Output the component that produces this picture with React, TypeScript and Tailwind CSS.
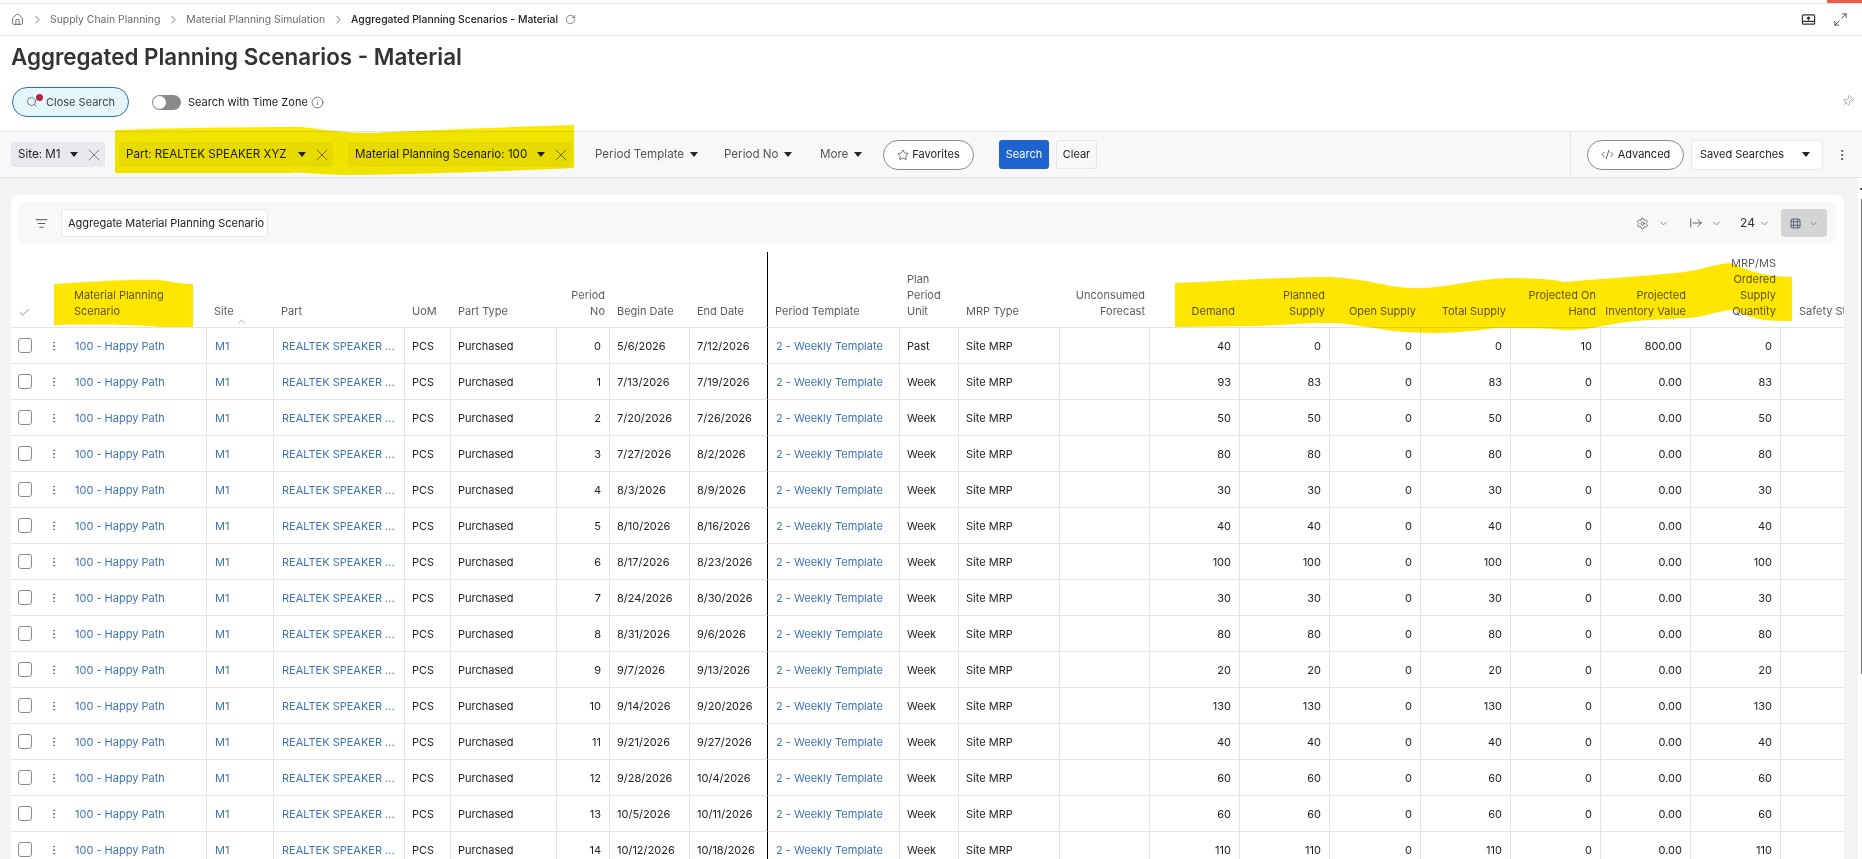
import {
  ArrowRightFromLine,
  Check,
  ChevronDown,
  ChevronRight,
  ChevronUp,
  CodeXml,
  EllipsisVertical,
  Home,
  Info,
  ListFilter,
  Maximize2,
  Pin,
  RotateCw,
  Search,
  Settings,
  Star,
  X,
} from "lucide-react";

type Row = { begin: string; end: string; unit: string; demand: number; planned: number; onHand: number; inv: string };

const rowData: [string, string, number, number][] = [
  ["5/6/2026", "7/12/2026", 40, 0],
  ["7/13/2026", "7/19/2026", 93, 83],
  ["7/20/2026", "7/26/2026", 50, 50],
  ["7/27/2026", "8/2/2026", 80, 80],
  ["8/3/2026", "8/9/2026", 30, 30],
  ["8/10/2026", "8/16/2026", 40, 40],
  ["8/17/2026", "8/23/2026", 100, 100],
  ["8/24/2026", "8/30/2026", 30, 30],
  ["8/31/2026", "9/6/2026", 80, 80],
  ["9/7/2026", "9/13/2026", 20, 20],
  ["9/14/2026", "9/20/2026", 130, 130],
  ["9/21/2026", "9/27/2026", 40, 40],
  ["9/28/2026", "10/4/2026", 60, 60],
  ["10/5/2026", "10/11/2026", 60, 60],
  ["10/12/2026", "10/18/2026", 110, 110],
];

const rows: Row[] = rowData.map(([begin, end, demand, planned], i) => ({
  begin,
  end,
  demand,
  planned,
  unit: i === 0 ? "Past" : "Week",
  onHand: i === 0 ? 10 : 0,
  inv: i === 0 ? "800.00" : "0.00",
}));

const colWidths = [
  "w-[35px]", "w-[24px]", "w-[137px]", "w-[67px]", "w-[131px]", "w-[46px]", "w-[106px]", "w-[53px]", "w-[80px]",
  "w-[78px]", "w-[132px]", "w-[59px]", "w-[101px]", "w-[90px]", "w-[90px]", "w-[90px]", "w-[91px]", "w-[90px]",
  "w-[90px]", "w-[90px]", "w-[90px]", "w-[90px]",
];

const thBase = "align-bottom font-normal pb-2 border-b border-[#e3e3e3] text-[#5c5c5c]";
const thLeft = `${thBase} text-left pl-[7px] pr-1`;
const thRight = `${thBase} text-right pr-[5px] pl-1`;
const tdBase = "h-[36px] border-b border-r whitespace-nowrap overflow-hidden";
const td = `${tdBase} pl-[7px] pr-1 border-[#e3e3e3] text-[#222]`;
const tdBlack = `${tdBase} pl-[7px] pr-1 border-b-[#e3e3e3] border-r-black text-[#222]`;
const tdLink = `${tdBase} pl-[8px] pr-1 border-[#e3e3e3] text-[#3d74b3]`;
const tdNum = `${tdBase} pr-2 pl-1 text-right border-[#e3e3e3] text-[#222]`;

function Caret() {
  return <span className="inline-block w-0 h-0 border-x-[4px] border-x-transparent border-t-[5px] border-t-[#222]" />;
}

function Crumb({ label }: { label: string }) {
  return (
    <>
      <span className="text-[#6a6a6a]">{label}</span>
      <ChevronRight className="w-[13px] h-[13px] ml-[7px] mr-[6px] text-[#555]" strokeWidth={1.5} />
    </>
  );
}

function Chip({ label, className }: { label: string; className: string }) {
  return (
    <div className={`flex items-center h-[25px] rounded-[3px] pl-[7px] pr-[1px] text-[11.6px] text-[#222] whitespace-nowrap ${className}`}>
      <span>{label}</span>
      <span className="flex-1" />
      <Caret />
      <X className="w-[20px] h-[20px] ml-[6px] text-[#666]" strokeWidth={1} />
    </div>
  );
}

function MenuFilter({ label, className }: { label: string; className: string }) {
  return (
    <div className={`flex items-center gap-[6px] text-[11.6px] text-[#555] whitespace-nowrap ${className}`}>
      <span>{label}</span>
      <Caret />
    </div>
  );
}

function Highlights() {
  return (
    <svg className="absolute left-0 top-0 w-[1862px] h-[859px] pointer-events-none mix-blend-multiply" viewBox="0 0 1862 859">
      <path
        d="M115 130 C170 128 230 127 300 127 C330 130 345 133 370 133 C430 130 510 127 574 125 L574 168 C510 171 420 174 345 175 C320 175 305 172 290 173 L115 173 Z"
        fill="#f7ea00"
      />
      <path d="M54 284 C90 282 130 279 160 280 C172 282 182 284 193 284 L193 327 L160 327 C140 325 90 324 54 325 Z" fill="#ffe600" />
      <path
        d="M1175 283 C1230 281 1280 277 1330 277 C1370 279 1385 287 1411 288 C1440 290 1470 279 1509 278 C1530 278 1555 279 1563 282 C1590 280 1630 277 1675 273 C1695 272 1710 265 1729 263 C1745 268 1755 276 1792 277 L1792 321 C1770 321 1760 320 1755 318 C1745 316 1738 310 1729 310 C1710 313 1700 318 1684 318 C1650 320 1625 321 1608 325 C1590 329 1580 330 1563 330 C1545 328 1520 328 1496 328 C1470 332 1445 333 1429 333 C1400 332 1390 331 1375 328 C1360 326 1345 323 1330 323 C1300 323 1270 326 1250 326 L1175 327 Z"
        fill="#ffe600"
      />
    </svg>
  );
}

export default function App() {
  return (
    <div className="relative w-[1862px] h-[859px] overflow-hidden bg-white font-['Inter',sans-serif] text-[11px]">
      {/* top strip */}
      <div className="flex justify-end h-[3px]">
        <div className="w-[35px] bg-[#e8604c]" />
      </div>

      {/* breadcrumb */}
      <div className="flex items-center h-[33px] border-y border-[#e3e3e3] pl-[11px] pr-[14px] text-[10.4px]">
        <Home className="w-[13px] h-[13px] text-[#555]" strokeWidth={1.5} />
        <ChevronRight className="w-[13px] h-[13px] ml-[7px] mr-[6px] text-[#555]" strokeWidth={1.5} />
        <Crumb label="Supply Chain Planning" />
        <Crumb label="Material Planning Simulation" />
        <span className="font-medium text-[#222]">Aggregated Planning Scenarios - Material</span>
        <RotateCw className="w-[11px] h-[11px] ml-[7px] text-[#555]" strokeWidth={1.5} />
        <span className="flex-1" />
        <svg className="w-[15px] h-[15px] text-[#333]" viewBox="0 0 16 16" fill="none" stroke="currentColor" strokeWidth="1.3">
          <rect x="1.5" y="3" width="13" height="10" rx="1" />
          <path d="M1.5 10h13M8 9V5.5M6.2 7.2 8 5.4l1.8 1.8" />
        </svg>
        <Maximize2 className="w-[15px] h-[15px] ml-[17px] text-[#333]" strokeWidth={1.3} />
      </div>

      {/* page title */}
      <div className="relative h-[95px] px-[11px]">
        <h1 className="pt-[8px] text-[22.4px] leading-[26px] font-semibold text-[#333]">Aggregated Planning Scenarios - Material</h1>
        <div className="flex items-center mt-[17px]">
          <button className="relative flex items-center w-[117px] h-[30px] ml-px rounded-[15px] border border-[#2a6db0] bg-[#e4f5fb] pl-[33px] text-[#444]">
            <Search className="absolute left-[13px] top-[8px] w-[12px] h-[12px] text-[#444]" strokeWidth={1.3} />
            <span className="absolute left-[23px] top-[6px] w-[7px] h-[7px] rounded-full bg-[#b5234a]" />
            Close Search
          </button>
          <div className="relative w-[29px] h-[15px] ml-[23px] rounded-full bg-[#8a8a8a]">
            <span className="absolute left-[1px] top-[1px] w-[13px] h-[13px] rounded-full bg-white" />
          </div>
          <span className="ml-[7px] text-[#222]">Search with Time Zone</span>
          <Info className="w-[13px] h-[13px] ml-[3px] text-[#333]" strokeWidth={1.2} />
        </div>
        <Pin className="absolute right-[8px] top-[59px] w-[12px] h-[12px] rotate-45 text-[#777]" strokeWidth={1.2} />
      </div>

      {/* filter bar */}
      <div className="flex items-center h-[47px] bg-[#f8f8f8] border-y border-[#e3e3e3] pl-[11px]">
        <Chip label="Site: M1" className="w-[94px] bg-[#e8e9ee]" />
        <Chip label="Part: REALTEK SPEAKER XYZ" className="w-[214px] ml-[14px] bg-[#eeeeee]" />
        <Chip label="Material Planning Scenario: 100" className="w-[224px] ml-[15px] bg-[#eeeeee]" />
        <MenuFilter label="Period Template" className="w-[129px] ml-[23px]" />
        <MenuFilter label="Period No" className="w-[96px]" />
        <MenuFilter label="More" className="w-[63px]" />
        <button className="flex items-center justify-center gap-[3px] w-[91px] h-[30px] rounded-[15px] border border-[#8a8a8a] bg-white text-[#222]">
          <Star className="w-[12px] h-[12px]" strokeWidth={1.3} />
          Favorites
        </button>
        <button className="w-[50px] h-[29px] ml-[25px] rounded-[3px] bg-[#1f63d0] text-white">Search</button>
        <button className="w-[41px] h-[29px] ml-[7px] rounded-[3px] border border-[#e8e8e8] bg-[#f8f8f8] text-[#222]">Clear</button>
        <div className="flex items-center self-stretch ml-[473px] pl-[16px] border-l border-[#e3e3e3]">
          <button className="flex items-center justify-center gap-[4px] w-[97px] h-[30px] rounded-[15px] border border-[#8a8a8a] bg-white text-[#222]">
            <CodeXml className="w-[13px] h-[13px]" strokeWidth={1.3} />
            Advanced
          </button>
          <div className="flex items-center justify-between w-[132px] h-[30px] ml-[7px] pl-[8px] pr-[12px] rounded-[3px] border border-[#e8e8e8] bg-white text-[#222]">
            Saved Searches
            <Caret />
          </div>
          <EllipsisVertical className="w-[14px] h-[14px] ml-[12px] text-[#333]" strokeWidth={1.5} />
        </div>
      </div>

      {/* grid area */}
      <div className="relative h-[682px] bg-[#f3f3f5] pt-[17px] pl-[11px] pr-[18px]">
        <div className="w-[1833px] h-[665px] overflow-hidden rounded-t-lg bg-white pt-[7px]">
          <div className="flex items-center h-[42px] ml-[7px] mr-[8px] rounded-lg bg-[#f8f8f8] pl-[17px]">
            <ListFilter className="w-[13px] h-[13px] text-[#333]" strokeWidth={1.5} />
            <div className="flex items-center w-[207px] h-[28px] ml-[13px] pl-[6px] rounded-[3px] border border-[#e8e8e8] bg-white text-[#222] whitespace-nowrap">
              Aggregate Material Planning Scenario
            </div>
            <span className="flex-1" />
            <Settings className="w-[13px] h-[13px] text-[#444]" strokeWidth={1.3} />
            <ChevronDown className="w-[11px] h-[11px] ml-[9px] text-[#555]" strokeWidth={1.5} />
            <ArrowRightFromLine className="w-[14px] h-[14px] ml-[20px] text-[#333]" strokeWidth={1.3} />
            <ChevronDown className="w-[11px] h-[11px] ml-[8px] text-[#555]" strokeWidth={1.5} />
            <span className="ml-[18px] text-[12px] text-[#333]">24</span>
            <ChevronDown className="w-[11px] h-[11px] ml-[4px] text-[#555]" strokeWidth={1.5} />
            <div className="flex items-center justify-center gap-[7px] w-[46px] h-[28px] ml-[11px] mr-[9px] rounded-[4px] bg-[#d4d4d4]">
              <svg className="w-[11px] h-[11px] text-[#5a6a80]" viewBox="0 0 12 12" fill="none" stroke="currentColor" strokeWidth="1.1">
                <rect x="1" y="1" width="10" height="10" rx="2.5" />
                <path d="M4 1v10M8 1v10M1 4h10M1 8h10" />
              </svg>
              <ChevronDown className="w-[11px] h-[11px] text-[#666]" strokeWidth={1.5} />
            </div>
          </div>

          <table className="table-fixed border-separate border-spacing-0 w-[1860px] mt-[8px] leading-[16px]">
            <colgroup>
              {colWidths.map((w, i) => (
                <col key={i} className={w} />
              ))}
            </colgroup>
            <thead>
              <tr className="h-[76px]">
                <th className="align-bottom pb-2 pl-[7px] text-left border-b border-[#e3e3e3]">
                  <Check className="w-[13px] h-[13px] text-[#555]" strokeWidth={1.2} />
                </th>
                <th className="border-b border-[#e3e3e3]" />
                <th className={`${thBase} text-left pl-[4px]`}>Material Planning<br />Scenario</th>
                <th className={`${thLeft} relative`}>
                  Site
                  <ChevronUp className="absolute left-[29px] bottom-0 w-[11px] h-[11px] text-[#666]" strokeWidth={1.3} />
                </th>
                <th className={thLeft}>Part</th>
                <th className={thLeft}>UoM</th>
                <th className={thLeft}>Part Type</th>
                <th className={thRight}>Period<br />No</th>
                <th className={thLeft}>Begin Date</th>
                <th className={`${thLeft} border-r border-r-black`}>End Date</th>
                <th className={thLeft}>Period Template</th>
                <th className={thLeft}>Plan<br />Period<br />Unit</th>
                <th className={thLeft}>MRP Type</th>
                <th className={thRight}>Unconsumed<br />Forecast</th>
                <th className={thRight}>Demand</th>
                <th className={thRight}>Planned<br />Supply</th>
                <th className={thRight}>Open Supply</th>
                <th className={thRight}>Total Supply</th>
                <th className={thRight}>Projected On<br />Hand</th>
                <th className={thRight}>Projected<br />Inventory Value</th>
                <th className={thRight}>MRP/MS<br />Ordered<br />Supply<br />Quantity</th>
                <th className={`${thBase} text-left pl-[18px] whitespace-nowrap`}>Safety Stock</th>
              </tr>
            </thead>
            <tbody>
              {rows.map((row, i) => (
                <tr key={i}>
                  <td className="h-[36px] pl-[7px] border-b border-[#e3e3e3]">
                    <div className="w-[14px] h-[15px] rounded-[3px] border border-[#8a8a8a] bg-white" />
                  </td>
                  <td className="h-[36px] border-b border-[#e3e3e3]">
                    <EllipsisVertical className="w-[12px] h-[12px] ml-[2px] text-[#444]" strokeWidth={1.5} />
                  </td>
                  <td className={`${tdBase} pl-[5px] pr-1 border-[#e3e3e3] text-[#3d74b3]`}>100 - Happy Path</td>
                  <td className={tdLink}>M1</td>
                  <td className={tdLink}>REALTEK SPEAKER ...</td>
                  <td className={td}>PCS</td>
                  <td className={td}>Purchased</td>
                  <td className={tdNum}>{i}</td>
                  <td className={td}>{row.begin}</td>
                  <td className={tdBlack}>{row.end}</td>
                  <td className={tdLink}>2 - Weekly Template</td>
                  <td className={td}>{row.unit}</td>
                  <td className={td}>Site MRP</td>
                  <td className={td} />
                  <td className={tdNum}>{row.demand}</td>
                  <td className={tdNum}>{row.planned}</td>
                  <td className={tdNum}>0</td>
                  <td className={tdNum}>{row.planned}</td>
                  <td className={tdNum}>{row.onHand}</td>
                  <td className={tdNum}>{row.inv}</td>
                  <td className={tdNum}>{row.planned}</td>
                  <td className={tdNum} />
                </tr>
              ))}
            </tbody>
          </table>
        </div>
        {/* page scrollbar */}
        <div className="absolute right-0 top-0 bottom-0 w-[4px] bg-white">
          <div className="ml-[2px] mt-[10px] w-[2px] h-[2px] bg-[#555]" />
          <div className="ml-[3px] mt-[9px] w-px h-[475px] bg-[#707070]" />
        </div>
      </div>

      <Highlights />
    </div>
  );
}
